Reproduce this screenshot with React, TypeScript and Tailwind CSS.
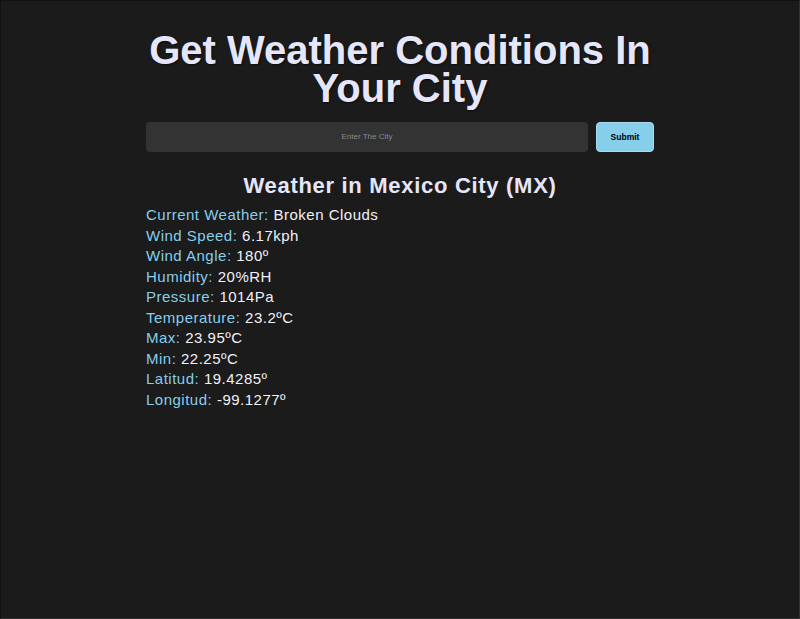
const rows: [string, string][] = [
  ['Current Weather', 'Broken Clouds'],
  ['Wind Speed', '6.17kph'],
  ['Wind Angle', '180º'],
  ['Humidity', '20%RH'],
  ['Pressure', '1014Pa'],
  ['Temperature', '23.2ºC'],
  ['Max', '23.95ºC'],
  ['Min', '22.25ºC'],
  ['Latitud', '19.4285º'],
  ['Longitud', '-99.1277º'],
];

export default function App() {
  return (
    <div className="h-[619px] bg-[#1b1b1b] border border-t-[#121212] border-l-[#121212] border-r-[#303030] border-b-[#303030] font-['Liberation_Sans',Arial,sans-serif] overflow-hidden">
      <div className="w-[508px] mx-auto pt-[30px]">
        <h1 className="text-[40px] leading-[38px] font-bold text-center text-[#e6e6fa] [text-shadow:1px_1px_2px_rgba(0,0,0,0.6)]">
          Get Weather Conditions In Your City
        </h1>

        <form className="mt-[15px] flex gap-2 h-[30px]" onSubmit={(e) => e.preventDefault()}>
          <input
            type="text"
            placeholder="Enter The City"
            className="flex-1 rounded bg-[#333333] text-center text-[8px] text-[#ddd] placeholder:text-[#8a8a8a] outline-none"
          />
          <button
            type="submit"
            className="w-[58px] rounded bg-[#87ceeb] border border-[#a8dcf0] text-[8.5px] font-bold text-black"
          >
            Submit
          </button>
        </form>

        <h2 className="mt-[20px] text-[22px] leading-[28px] font-bold tracking-[0.7px] text-center text-[#e6e6fa]">
          Weather in Mexico City (MX)
        </h2>

        <ul className="mt-[5px] text-[15px] leading-[20.5px] tracking-[0.5px]">
          {rows.map(([label, value]) => (
            <li key={label}>
              <span className="text-[#87ceeb]">{label}: </span>
              <span className="text-[#f0f0f8]">{value}</span>
            </li>
          ))}
        </ul>
      </div>
    </div>
  );
}
